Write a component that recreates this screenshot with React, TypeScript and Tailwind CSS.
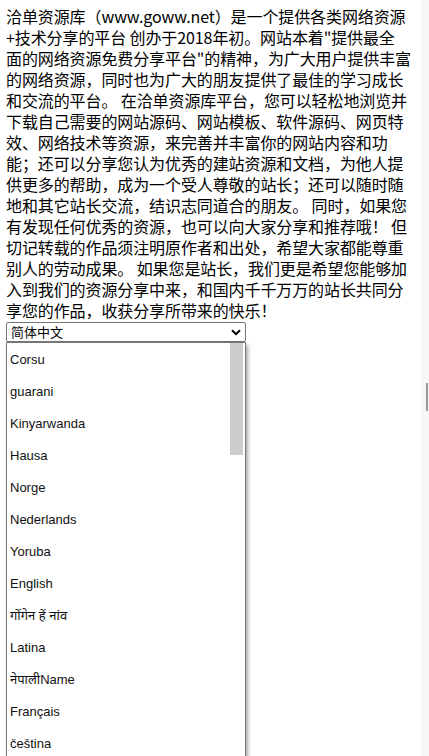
import { useState } from "react";

// line breaks kept as they fall in the original layout
const introLines = [
  "洽单资源库（www.goww.net）是一个提供各类网络资源",
  "+技术分享的平台 创办于2018年初。网站本着\"提供最全",
  "面的网络资源免费分享平台\"的精神，为广大用户提供丰富",
  "的网络资源，同时也为广大的朋友提供了最佳的学习成长",
  "和交流的平台。 在洽单资源库平台，您可以轻松地浏览并",
  "下载自己需要的网站源码、网站模板、软件源码、网页特",
  "效、网络技术等资源，来完善并丰富你的网站内容和功",
  "能；还可以分享您认为优秀的建站资源和文档，为他人提",
  "供更多的帮助，成为一个受人尊敬的站长；还可以随时随",
  "地和其它站长交流，结识志同道合的朋友。 同时，如果您",
  "有发现任何优秀的资源，也可以向大家分享和推荐哦！ 但",
  "切记转载的作品须注明原作者和出处，希望大家都能尊重",
  "别人的劳动成果。 如果您是站长，我们更是希望您能够加",
  "入到我们的资源分享中来，和国内千千万万的站长共同分",
  "享您的作品，收获分享所带来的快乐！",
];

const languages = [
  "Corsu",
  "guarani",
  "Kinyarwanda",
  "Hausa",
  "Norge",
  "Nederlands",
  "Yoruba",
  "English",
  "गोंगेन हें नांव",
  "Latina",
  "नेपालीName",
  "Français",
  "čeština",
  "Deutsch",
  "Español",
];

export default function App() {
  const [lang, setLang] = useState("简体中文");

  return (
    <div className="relative min-h-[756px] bg-white text-black font-['Noto_Sans_CJK_SC','Liberation_Sans',sans-serif]">
      <div className="px-[6px]">
        {/* Intro */}
        <p className="pt-[6px] text-[16px] leading-[21px] tracking-[-0.1px]">
          {introLines.map((line, i) => (
            <span key={i} className="block whitespace-nowrap">
              {line}
            </span>
          ))}
        </p>

        {/* Language picker (opened) */}
        <div className="mt-[1px] w-[240px]">
          <div className="flex h-[20px] items-center justify-between rounded-[2px] border border-[#767676] pl-[4px] pr-[4px] text-[13px]">
            <span>{lang}</span>
            <svg width="10" height="7" viewBox="0 0 10 7">
              <path d="M1 1.2 L5 5.2 L9 1.2" fill="none" stroke="#000" strokeWidth="2" />
            </svg>
          </div>
          <div className="relative h-[420px] overflow-hidden border border-[#767676] bg-white shadow-[2px_3px_4px_rgba(0,0,0,0.35)]">
            <ul className="pt-[1px] text-[13px]">
              {languages.map((l) => (
                <li
                  key={l}
                  onClick={() => setLang(l)}
                  className="flex h-[32px] items-center pl-[3px] text-[#111] font-['Liberation_Sans','Noto_Sans',sans-serif]"
                >
                  {l}
                </li>
              ))}
            </ul>
            <div className="absolute right-[2px] top-0 h-[112px] w-[13px] bg-[#cdcdcd]" />
          </div>
        </div>
      </div>

      {/* page scrollbar */}
      <div className="fixed right-0 top-0 h-full w-[8px] bg-[#f7f7f9]">
        <div className="ml-[5px] mt-[383px] h-[28px] w-[2px] bg-[#9a9a9a]" />
      </div>
    </div>
  );
}
